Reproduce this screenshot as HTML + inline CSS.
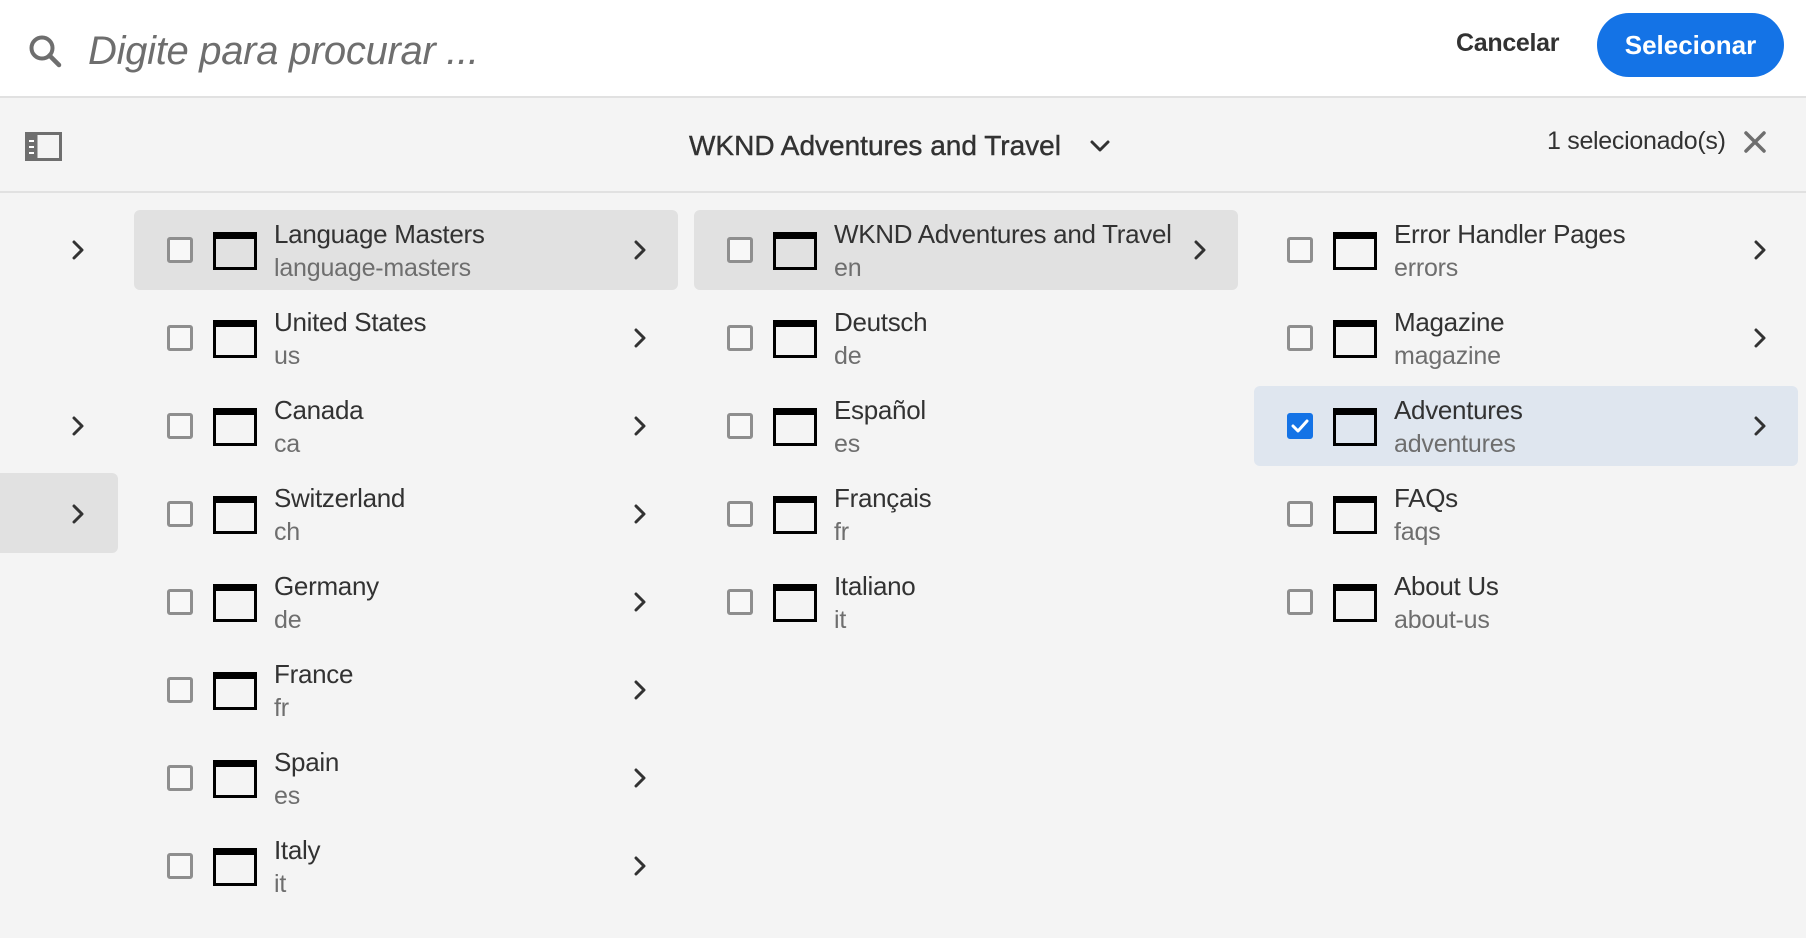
<!DOCTYPE html>
<html><head><meta charset="utf-8"><style>
*{box-sizing:border-box;margin:0;padding:0}
body{width:1806px;height:938px;overflow:hidden;background:#f4f4f4;font-family:"Liberation Sans",sans-serif;position:relative;color:#323232}
.hdr{position:absolute;left:0;top:0;width:1806px;height:98px;background:#fff;border-bottom:2px solid #e1e1e1}
.ph{position:absolute;left:88px;top:29px;font-size:40px;font-style:italic;color:#6e6e6e;letter-spacing:-0.3px}
.cancel{position:absolute;left:1456px;top:29px;font-size:25px;font-weight:bold;color:#323232;letter-spacing:-0.3px}
.btn{position:absolute;left:1597px;top:13px;width:187px;height:64px;border-radius:32px;background:#1473e6;color:#fff;font-weight:bold;font-size:26px;text-align:center;line-height:64px}
.tb{position:absolute;left:0;top:98px;width:1806px;height:95px;border-bottom:2px solid #e1e1e1}
.title{position:absolute;left:689px;top:130px;font-size:28px;color:#323232;-webkit-text-stroke:0.4px #323232}
.sel{position:absolute;left:1547px;top:127px;font-size:25px;color:#323232;letter-spacing:-0.3px}
.item{position:absolute;width:544px;height:80px;border-radius:6px}
.cb{position:absolute;left:33px;top:27px;width:26px;height:26px;border:3px solid #8e8e8e;border-radius:3px;background:#f8f8f8}
.pi{position:absolute;left:79px;top:22px;width:44px;height:38px;border:3px solid #000;border-top-width:7px}
.t1{position:absolute;left:140px;top:9px;font-size:26px;color:#323232;white-space:nowrap;letter-spacing:-0.3px}
.t2{position:absolute;left:140px;top:44px;font-size:25px;color:#6e6e6e;letter-spacing:-0.2px}
.ch{position:absolute;left:498px;top:29px}
.c0{position:absolute;left:70px}
</style></head><body>
<div class="hdr">
<svg style="position:absolute;left:28px;top:34px" width="34" height="34" viewBox="0 0 34 34"><circle cx="14" cy="14" r="10.5" fill="none" stroke="#6e6e6e" stroke-width="4"/><line x1="21.5" y1="21.5" x2="31" y2="31" stroke="#6e6e6e" stroke-width="4.5" stroke-linecap="round"/></svg>
<div class="ph">Digite para procurar ...</div>
<div class="cancel">Cancelar</div>
<div class="btn">Selecionar</div>
</div>
<div class="tb"></div>
<svg style="position:absolute;left:25px;top:132px" width="37" height="29" viewBox="0 0 37 29"><rect x="1.5" y="1.5" width="34" height="26" fill="none" stroke="#6e6e6e" stroke-width="3"/><rect x="1.5" y="1.5" width="11" height="26" fill="#6e6e6e"/><rect x="4" y="8" width="5" height="2" fill="#fff"/><rect x="4" y="14" width="5" height="2" fill="#fff"/><rect x="4" y="20" width="5" height="2" fill="#fff"/></svg>
<div class="title">WKND Adventures and Travel</div>
<svg style="position:absolute;left:1089px;top:138px" width="22" height="16" viewBox="0 0 22 16"><path d="M3 4 L11 12 L19 4" fill="none" stroke="#323232" stroke-width="3" stroke-linecap="round" stroke-linejoin="round"/></svg>
<div class="sel">1 selecionado(s)</div>
<svg style="position:absolute;left:1743px;top:130px" width="24" height="24" viewBox="0 0 24 24"><path d="M3 3 L21 21 M21 3 L3 21" stroke="#6e6e6e" stroke-width="3.5" stroke-linecap="round"/></svg>

<div style="position:absolute;left:0;top:473px;width:118px;height:80px;background:#e1e1e1;border-radius:0 6px 6px 0"></div>
<svg class="c0" style="top:239px" width="16" height="22" viewBox="0 0 16 22"><path d="M4 3 L12 11 L4 19" fill="none" stroke="#323232" stroke-width="3" stroke-linecap="round" stroke-linejoin="round"/></svg>
<svg class="c0" style="top:415px" width="16" height="22" viewBox="0 0 16 22"><path d="M4 3 L12 11 L4 19" fill="none" stroke="#323232" stroke-width="3" stroke-linecap="round" stroke-linejoin="round"/></svg>
<svg class="c0" style="top:503px" width="16" height="22" viewBox="0 0 16 22"><path d="M4 3 L12 11 L4 19" fill="none" stroke="#323232" stroke-width="3" stroke-linecap="round" stroke-linejoin="round"/></svg>

<div id="cols"></div>
<script>
var chev='<svg class="ch" width="16" height="22" viewBox="0 0 16 22"><path d="M4 3 L12 11 L4 19" fill="none" stroke="#323232" stroke-width="3" stroke-linecap="round" stroke-linejoin="round"/></svg>';
var cols=[
 [134,[["Language Masters","language-masters",1,"#e1e1e1"],["United States","us",1],["Canada","ca",1],["Switzerland","ch",1],["Germany","de",1],["France","fr",1],["Spain","es",1],["Italy","it",1]]],
 [694,[["WKND Adventures and Travel","en",1,"#e1e1e1"],["Deutsch","de",0],["Español","es",0],["Français","fr",0],["Italiano","it",0]]],
 [1254,[["Error Handler Pages","errors",1],["Magazine","magazine",1],["Adventures","adventures",1,"#dfe6ef",1],["FAQs","faqs",0],["About Us","about-us",0]]]
];
var h='';
cols.forEach(function(c){c[1].forEach(function(it,i){
 var top=210+i*88;
 var cb=it[4]?'<div class="cb" style="background:#1473e6;border-color:#1473e6"><svg style="position:absolute;left:1px;top:2px" width="18" height="16" viewBox="0 0 18 16"><path d="M2 8 L7 13 L16 3" fill="none" stroke="#fff" stroke-width="3" stroke-linecap="round" stroke-linejoin="round"/></svg></div>':'<div class="cb"></div>';
 h+='<div class="item" style="left:'+c[0]+'px;top:'+top+'px;background:'+(it[3]||'transparent')+'">'+cb+'<div class="pi"></div><div class="t1">'+it[0]+'</div><div class="t2">'+it[1]+'</div>'+(it[2]?chev:'')+'</div>';
});});
document.getElementById('cols').innerHTML=h;
</script>
</body></html>
